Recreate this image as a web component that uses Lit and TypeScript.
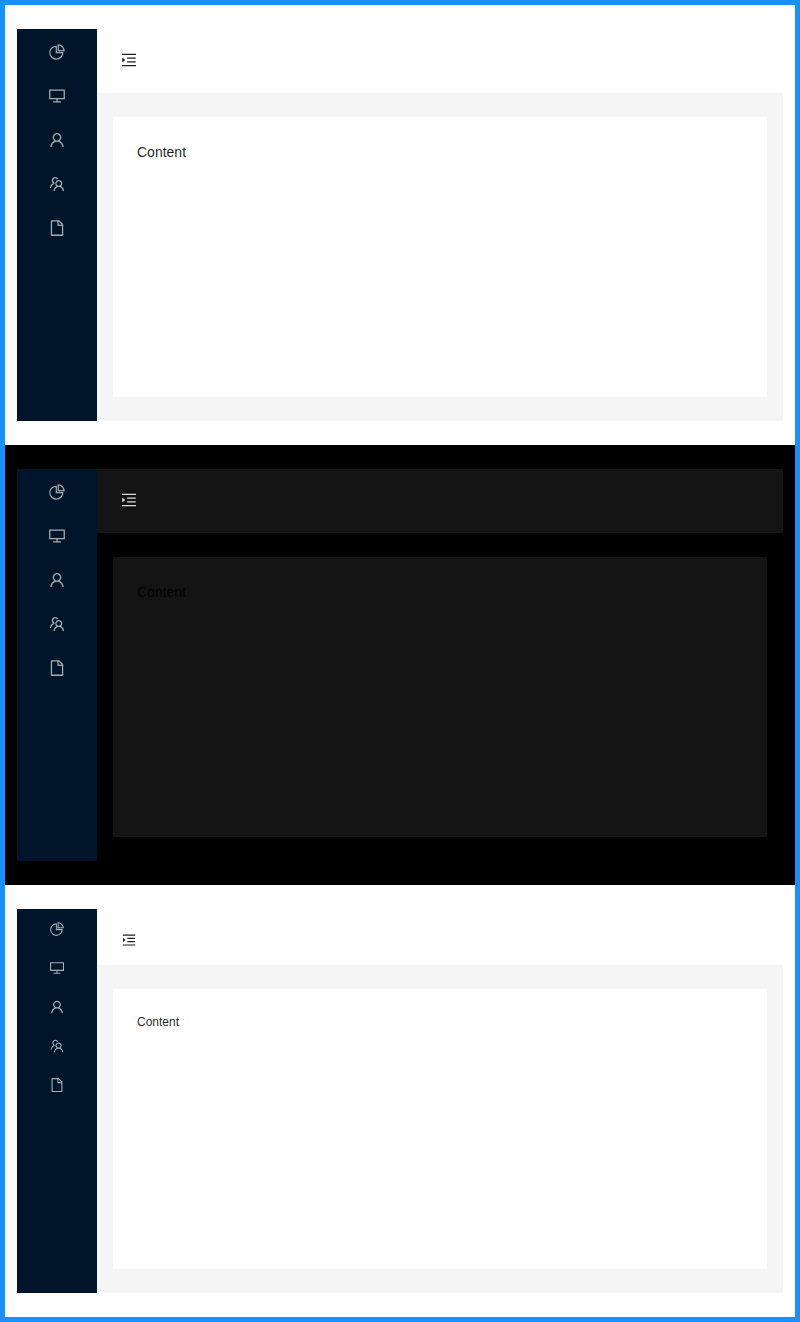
import { LitElement, html, css } from "lit";
import { customElement, property } from "lit/decorators.js";

const ICONS: Record<string, string> = {
  pie: "M864 518H506V160c0-4.4-3.6-8-8-8h-26a398.46 398.46 0 00-282.8 117.1 398.19 398.19 0 00-85.7 127.1A397.61 397.61 0 0072 552a398.46 398.46 0 00117.1 282.8c36.7 36.7 79.5 65.6 127.1 85.7A397.61 397.61 0 00472 952a398.46 398.46 0 00282.8-117.1c36.7-36.7 65.6-79.5 85.7-127.1A397.61 397.61 0 00872 552v-26c0-4.4-3.6-8-8-8zM705.7 787.8A331.59 331.59 0 01470.4 884c-88.1-.4-170.9-34.9-233.2-97.2C174.5 724.1 140 640.7 140 552c0-88.7 34.5-172.1 97.2-234.8 54.6-54.6 124.9-87.9 200.8-95.5V586h364.3c-7.7 76.3-41.3 147-96.6 201.8zM952 462.4l-2.6-28.2c-8.5-92.1-49.4-179-115.2-244.6A399.4 399.4 0 00589 74.6L560.7 72c-4.7-.4-8.7 3.2-8.7 7.9V464c0 4.4 3.6 8 8 8l384-1c4.7 0 8.4-4 8-8.6zm-332.2-58.2V147.6a332.24 332.24 0 01166.4 89.8c45.7 45.6 77 103.6 90 166.1l-256.4.7z",
  desktop: "M928 140H96c-17.7 0-32 14.3-32 32v496c0 17.7 14.3 32 32 32h380v112H304c-8.8 0-16 7.2-16 16v48c0 4.4 3.6 8 8 8h432c4.4 0 8-3.6 8-8v-48c0-8.8-7.2-16-16-16H548V700h380c17.7 0 32-14.3 32-32V172c0-17.7-14.3-32-32-32zm-40 488H136V212h752v416z",
  user: "M858.5 763.6a374 374 0 00-80.6-119.5 375.63 375.63 0 00-119.5-80.6c-.4-.2-.8-.3-1.2-.5C719.5 518 760 444.7 760 362c0-137-111-248-248-248S264 225 264 362c0 82.7 40.5 156 102.8 201.1-.4.2-.8.3-1.2.5-44.8 18.9-85 46-119.5 80.6a375.63 375.63 0 00-80.6 119.5A371.7 371.7 0 00136 901.8a8 8 0 008 8.2h60c4.4 0 7.9-3.5 8-7.8 2-77.2 33-149.5 87.8-204.3 56.7-56.7 132-87.9 212.2-87.9s155.5 31.2 212.2 87.9C779 752.7 810 825 812 902.2c.1 4.4 3.6 7.8 8 7.8h60a8 8 0 008-8.2c-1-47.8-10.9-94.3-29.5-138.2zM512 534c-45.9 0-89.1-17.9-121.6-50.4S340 407.9 340 362c0-45.9 17.9-89.1 50.4-121.6S466.1 190 512 190s89.1 17.9 121.6 50.4S684 316.1 684 362c0 45.9-17.9 89.1-50.4 121.6S557.9 534 512 534z",
  team: "M824.2 699.9a301.55 301.55 0 00-86.4-60.4C783.1 602.8 812 546.8 812 484c0-110.8-92.4-201.7-203.2-200-109.1 1.7-197 90.6-197 200 0 62.8 29 118.8 74.2 155.5a300.95 300.95 0 00-86.4 60.4C345 754.6 314 826.8 312 903.8a8 8 0 008 8.2h56c4.3 0 7.9-3.4 8-7.7 1.9-58 25.4-112.3 66.7-153.5A226.62 226.62 0 01612 684c60.9 0 118.2 23.7 161.3 66.8C814.6 792 838 846.3 840 904.3c.1 4.3 3.7 7.7 8 7.7h56a8 8 0 008-8.2c-2-77-33-149.2-87.8-203.9zM612 612c-34.2 0-66.4-13.3-90.5-37.5a126.86 126.86 0 01-37.5-91.8c.3-32.8 13.4-64.5 36.3-88 24-24.6 56.1-38.3 90.4-38.7 33.9-.3 66.8 12.9 91 36.6 24.8 24.3 38.4 56.8 38.4 91.4 0 34.2-13.3 66.3-37.5 90.5A127.3 127.3 0 01612 612zM361.5 510.4c-.9-8.7-1.4-17.5-1.4-26.4 0-15.9 1.5-31.4 4.3-46.5.7-3.6-1.2-7.3-4.5-8.8-13.6-6.1-26.1-14.5-36.9-25.1a127.54 127.54 0 01-38.7-95.4c.9-32.1 13.8-62.6 36.3-85.6 24.7-25.3 57.9-39.1 93.2-38.7 31.9.3 62.7 12.6 86 34.4 7.9 7.4 14.7 15.6 20.4 24.4 2 3.1 5.9 4.4 9.3 3.2 17.6-6.1 36.2-10.4 55.3-12.4 5.6-.6 8.8-6.6 6.3-11.6-32.5-64.3-98.9-108.7-175.7-109.9-110.9-1.7-203.3 89.2-203.3 199.9 0 62.8 28.9 118.8 74.2 155.5-31.8 14.7-61.1 35-86.5 60.4-54.8 54.7-85.8 126.9-87.8 204a8 8 0 008 8.2h56.1c4.3 0 7.9-3.4 8-7.7 1.9-58 25.4-112.3 66.7-153.5 29.4-29.4 65.4-49.8 104.7-59.7 3.9-1 6.5-4.7 6-8.7z",
  file: "M854.6 288.6L639.4 73.4c-6-6-14.1-9.4-22.6-9.4H192c-17.7 0-32 14.3-32 32v832c0 17.7 14.3 32 32 32h640c17.7 0 32-14.3 32-32V311.3c0-8.5-3.4-16.7-9.4-22.7zM790.2 326H602V137.8L790.2 326zm1.8 562H232V136h302v216a42 42 0 0042 42h216v494z",
  unfold: "M408 442h480c4.4 0 8-3.6 8-8v-56c0-4.4-3.6-8-8-8H408c-4.4 0-8 3.6-8 8v56c0 4.4 3.6 8 8 8zm-8 204c0 4.4 3.6 8 8 8h480c4.4 0 8-3.6 8-8v-56c0-4.4-3.6-8-8-8H408c-4.4 0-8 3.6-8 8v56zm504-486H120c-4.4 0-8 3.6-8 8v56c0 4.4 3.6 8 8 8h784c4.4 0 8-3.6 8-8v-56c0-4.4-3.6-8-8-8zm0 632H120c-4.4 0-8 3.6-8 8v56c0 4.4 3.6 8 8 8h784c4.4 0 8-3.6 8-8v-56c0-4.4-3.6-8-8-8zM142.4 642.1L298.7 519a8.84 8.84 0 000-13.9L142.4 381.9c-5.8-4.6-14.4-.5-14.4 6.9v246.3a8.9 8.9 0 0014.4 7z",
};

const MENU = ["pie", "desktop", "user", "team", "file"];

const icon = (name: string) => html`
  <svg class="icon" viewBox="0 0 1024 1024" fill="currentColor" aria-hidden="true">
    <path d=${ICONS[name]}></path>
  </svg>
`;

@customElement("demo-layout")
export class DemoLayout extends LitElement {
  @property({ reflect: true }) theme = "default";

  static styles = css`
    :host {
      --page: #fff;
      --panel: #fff;
      --layout: #f5f5f5;
      --trigger: rgba(0, 0, 0, 0.88);
      --icon: 18px;
      --pitch: 44px;
      --menu-top: 1px;
      --header: 64px;
      --header-line: 62px;
      --trigger-box: 64px;
      --font: 14px;
      --line: 22px;
      display: block;
      padding: 24px 12px;
      background: var(--page);
    }
    :host([theme="dark"]) {
      --page: #000;
      --panel: #141414;
      --layout: #000;
      --trigger: rgba(255, 255, 255, 0.85);
    }
    :host([theme="compact"]) {
      --icon: 16px;
      --pitch: 39px;
      --menu-top: 0.5px;
      --header: 56px;
      --font: 12px;
      --line: 18px;
    }
    .layout {
      display: flex;
      background: var(--layout);
    }
    .sider {
      flex: none;
      width: 80px;
      background: #001529;
      color: rgba(255, 255, 255, 0.65);
    }
    .menu {
      list-style: none;
      margin: 0;
      padding: var(--menu-top) 0 0;
    }
    .item {
      display: flex;
      align-items: center;
      justify-content: center;
      height: var(--pitch);
    }
    .icon {
      display: block;
      width: var(--icon);
      height: var(--icon);
    }
    .body {
      flex: 1;
      display: flex;
      flex-direction: column;
    }
    .header {
      height: var(--header);
      background: var(--panel);
    }
    .trigger {
      display: flex;
      align-items: center;
      justify-content: center;
      width: var(--trigger-box);
      height: var(--header-line);
      padding: 0;
      border: 0;
      background: none;
      color: var(--trigger);
    }
    .content {
      box-sizing: border-box;
      height: 280px;
      margin: 24px 16px;
      padding: 24px;
      background: var(--panel);
      color: rgba(0, 0, 0, 0.88);
      font: var(--font) / var(--line) "Liberation Sans", Arial, sans-serif;
    }
  `;

  render() {
    return html`
      <section class="layout">
        <aside class="sider">
          <ul class="menu">
            ${MENU.map((name) => html`<li class="item">${icon(name)}</li>`)}
          </ul>
        </aside>
        <div class="body">
          <header class="header">
            <button class="trigger">${icon("unfold")}</button>
          </header>
          <main class="content">Content</main>
        </div>
      </section>
    `;
  }
}

@customElement("app-root")
export class AppRoot extends LitElement {
  static styles = css`
    :host {
      display: block;
      border: 5px solid #1890ff;
    }
  `;

  render() {
    return html`
      <demo-layout theme="default"></demo-layout>
      <demo-layout theme="dark"></demo-layout>
      <demo-layout theme="compact"></demo-layout>
    `;
  }
}
